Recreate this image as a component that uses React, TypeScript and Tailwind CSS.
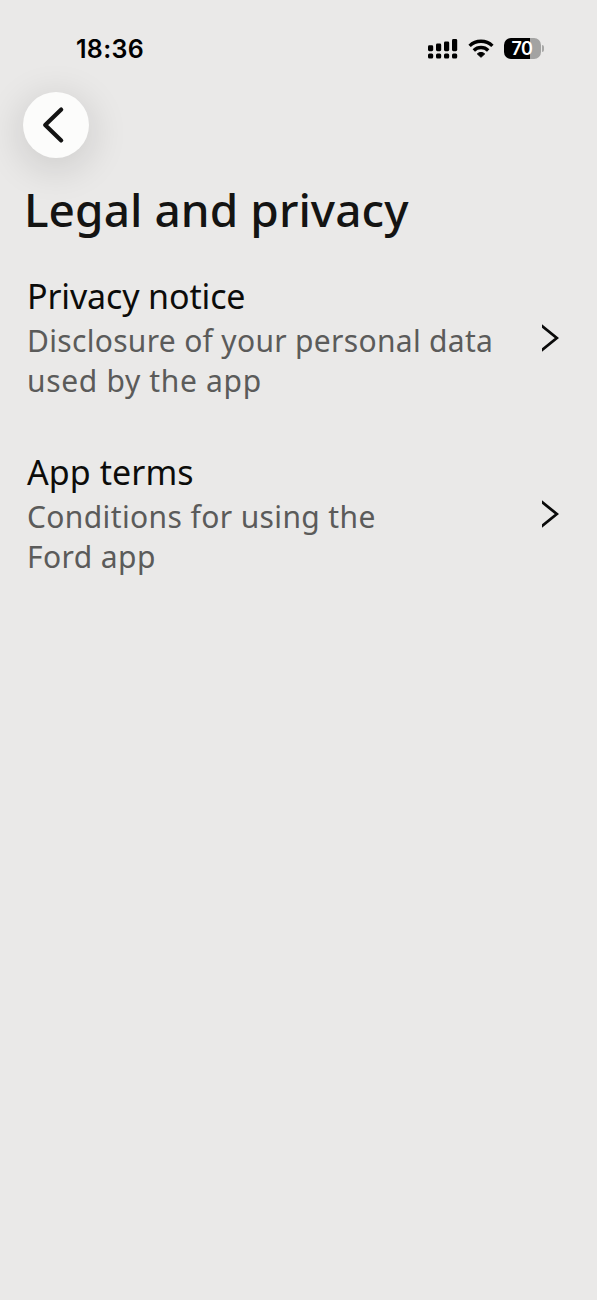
interface LegalItem {
  title: string;
  lines: string[];
  titleClass: string;
  lineClasses: string[];
}

const items: LegalItem[] = [
  {
    title: 'Privacy notice',
    lines: ['Disclosure of your personal data', 'used by the app'],
    titleClass: 'tracking-[-0.14px]',
    lineClasses: ['tracking-[0.31px]', 'tracking-[0.66px]'],
  },
  {
    title: 'App terms',
    lines: ['Conditions for using the', 'Ford app'],
    titleClass: 'tracking-[0.08px]',
    lineClasses: ['tracking-[0.38px]', 'tracking-[0.42px]'],
  },
];

function SignalIcon() {
  return (
    <svg width="30" height="20" viewBox="0 0 30 20" fill="#000">
      <rect x="0" y="6.3" width="5.2" height="5.9" rx="1.4" />
      <rect x="8" y="4.6" width="5.2" height="7.6" rx="1.4" />
      <rect x="16" y="2.4" width="5.2" height="9.8" rx="1.4" />
      <rect x="24" y="0" width="5.2" height="12.2" rx="1.4" />
      <rect x="0" y="14.6" width="5.2" height="5" rx="1.5" />
      <rect x="8" y="14.6" width="5.2" height="5" rx="1.5" />
      <rect x="16" y="14.6" width="5.2" height="5" rx="1.5" />
      <rect x="24" y="14.6" width="5.2" height="5" rx="1.5" />
    </svg>
  );
}

function WifiIcon() {
  return (
    <svg width="26" height="19" viewBox="0 0 26 19" fill="none" stroke="#000" strokeWidth="3.4">
      <path d="M1.6 6.9a16.4 16.4 0 0 1 22.8 0" />
      <path d="M5.8 11.5a10.2 10.2 0 0 1 14.4 0" />
      <path
        d="M13 18.3 9.3 14.9a5.4 5.4 0 0 1 7.4 0Z"
        fill="#000"
        stroke="#000"
        strokeWidth="1"
        strokeLinejoin="round"
      />
    </svg>
  );
}

function BatteryIcon() {
  return (
    <div className="flex items-center gap-px">
      <div className="flex h-[21px] w-[37px] items-center justify-center rounded-[7px] bg-[linear-gradient(to_right,#000_70%,#a3a3a2_70%)] pr-px text-[18px] leading-none font-semibold tracking-[-0.5px] text-white">
        70
      </div>
      <div className="h-[7px] w-[2px] rounded-r-full bg-[#a8a8a7]" />
    </div>
  );
}

function StatusBar() {
  return (
    <div className="flex h-[92px] items-start justify-between pt-[36px] pr-[53px] pl-[76px] font-['Inter',sans-serif]">
      <span className="text-[25px] leading-[26px] font-semibold tracking-[0.3px] text-black">
        18:36
      </span>
      <div className="flex h-[25px] items-center gap-[10px]">
        <SignalIcon />
        <WifiIcon />
        <BatteryIcon />
      </div>
    </div>
  );
}

function LegalRow({ item }: { item: LegalItem }) {
  return (
    <button className="flex w-full items-center justify-between pr-[38px] pl-[27px] text-left">
      <span className="block whitespace-nowrap">
        <span className={`block text-[34px] leading-[49px] text-[#0c0c0a] ${item.titleClass}`}>
          {item.title}
        </span>
        {item.lines.map((line, i) => (
          <span
            key={line}
            className={`block text-[30px] leading-[40px] text-[#5b5b5a] ${item.lineClasses[i]}`}
          >
            {line}
          </span>
        ))}
      </span>
      <svg
        className="mt-[3px] overflow-hidden"
        width="17"
        height="28"
        viewBox="0 0 17 28"
        fill="none"
        stroke="#0a0a0a"
        strokeWidth="2.8"
      >
        <path d="M-2 0.4 14.8 14-2 27.6" />
      </svg>
    </button>
  );
}

export default function App() {
  return (
    <div className="min-h-[1300px] w-full overflow-hidden bg-[#eae9e8] font-['Noto_Sans',sans-serif]">
      <StatusBar />
      <button
        aria-label="Back"
        className="ml-[23px] flex size-[66px] items-center justify-center rounded-full bg-[#fcfcfb] shadow-[0_8px_36px_6px_rgba(0,0,0,0.11)]"
      >
        <svg
          className="mr-[4px]"
          width="24"
          height="38"
          viewBox="0 0 24 38"
          fill="none"
          stroke="#131313"
          strokeWidth="4.2"
          strokeLinecap="round"
          strokeLinejoin="round"
        >
          <path d="M19.2 3.6 3.2 19l16 15.4" />
        </svg>
      </button>
      <h1 className="mt-[21px] pl-[24px] text-[46px] leading-[60px] font-medium tracking-[0.05px] whitespace-nowrap text-[#141413]">
        Legal and privacy
      </h1>
      <div className="mt-[33px] flex flex-col gap-[47px]">
        {items.map((item) => (
          <LegalRow key={item.title} item={item} />
        ))}
      </div>
    </div>
  );
}
